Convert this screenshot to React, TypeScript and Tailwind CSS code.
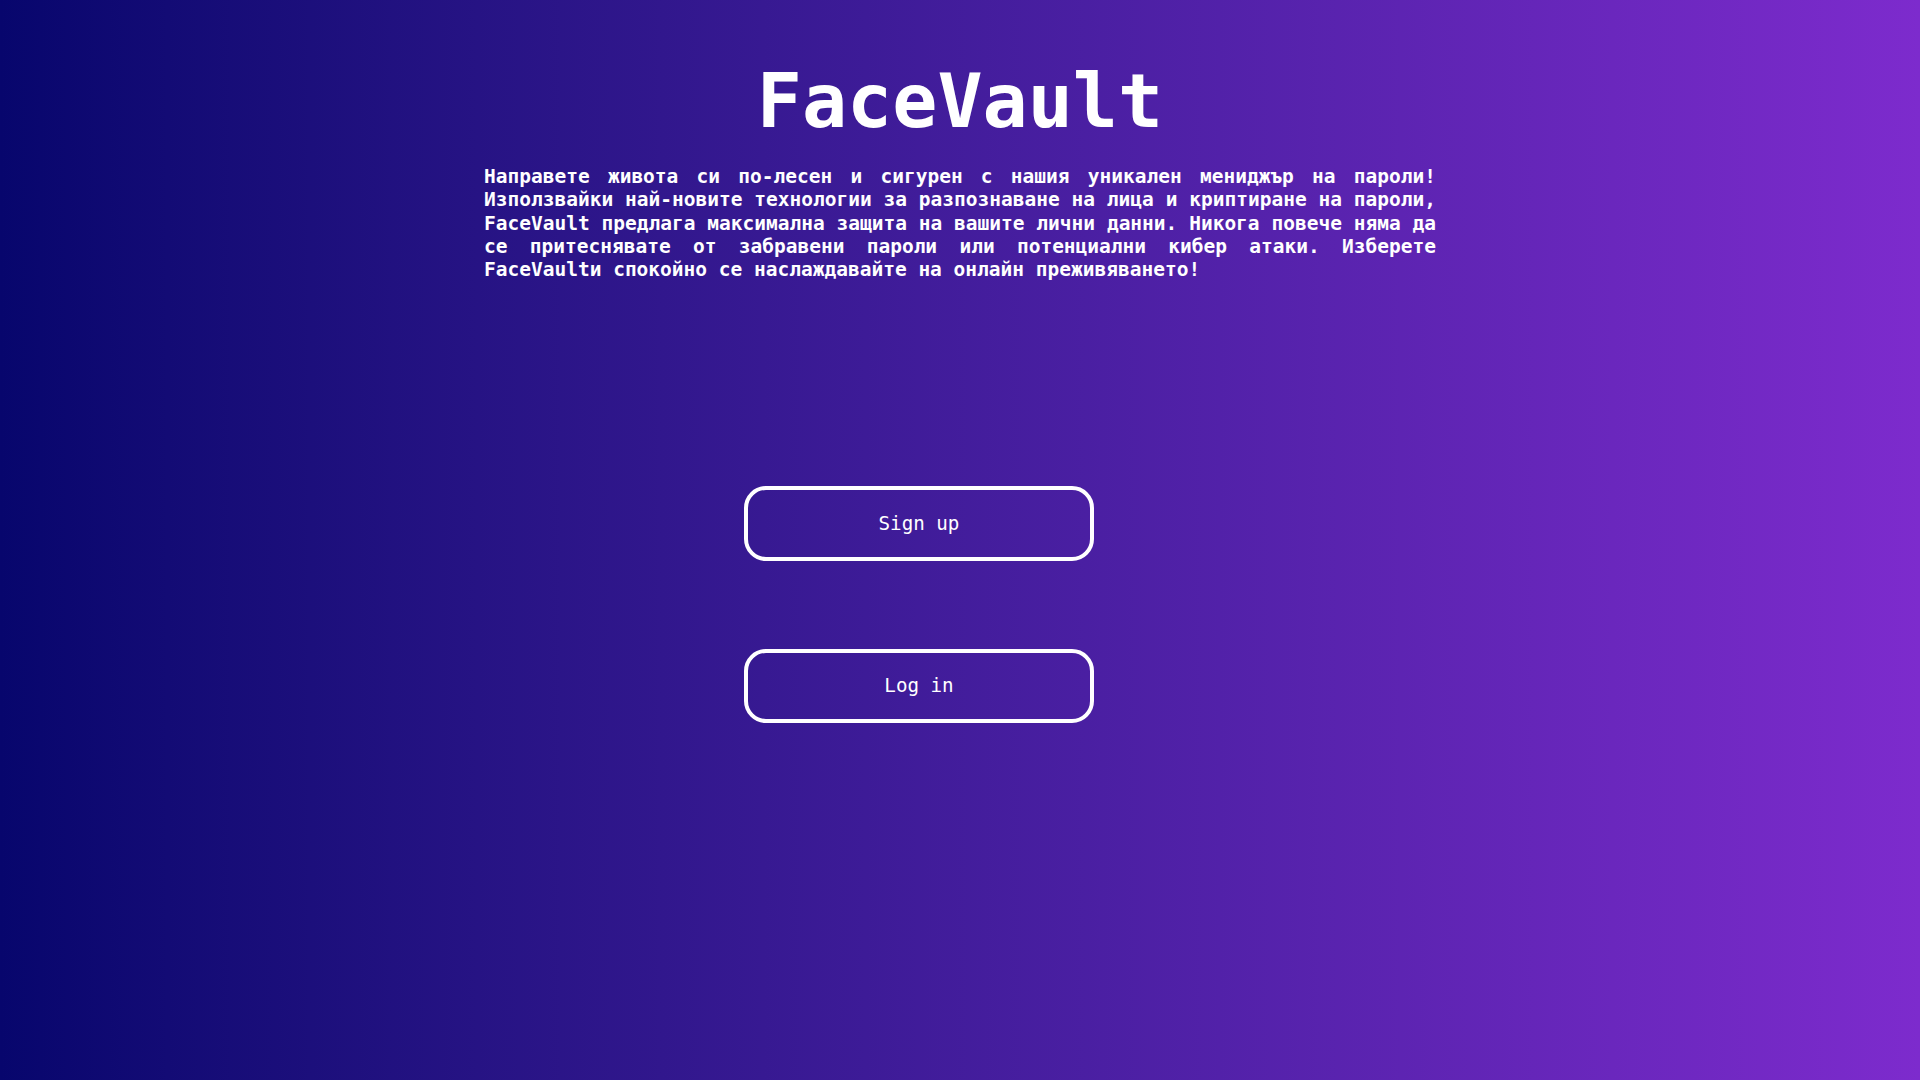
export default function App() {
  const mono = "font-['DejaVu_Sans_Mono',monospace]";
  return (
    <div className={`min-h-screen w-full bg-gradient-to-r from-[#07066d] to-[#7d2bcd] text-white ${mono}`}>
      {/* Header */}
      <div className="flex flex-col items-center pt-[56px]">
        <h1 className="text-[75px] font-bold leading-[91px]">FaceVault</h1>
        <p className="w-[952px] mt-[18px] text-[19.5px] font-bold leading-[23.3px] text-justify">
          Направете живота си по-лесен и сигурен с нашия уникален мениджър на пароли! Използвайки
          най-новите технологии за разпознаване на лица и криптиране на пароли, FaceVault предлага
          максимална защита на вашите лични данни. Никога повече няма да се притеснявате от
          забравени пароли или потенциални кибер атаки. Изберете FaceVaultи спокойно се
          наслаждавайте на онлайн преживяването!
        </p>
      </div>

      {/* Buttons */}
      <div className="flex flex-col items-center pr-[82px] mt-[205px] gap-[88px]">
        <button className="w-[350px] h-[75px] rounded-[22px] border-4 border-white bg-transparent text-[19.2px] text-white">
          Sign up
        </button>
        <button className="w-[350px] h-[74px] rounded-[22px] border-4 border-white bg-transparent text-[19.2px] text-white">
          Log in
        </button>
      </div>
    </div>
  );
}
